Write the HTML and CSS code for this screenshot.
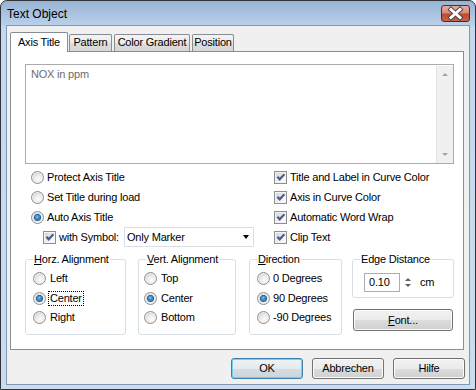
FILE: index.html
```html
<!DOCTYPE html>
<html lang="en">
<head>
    <meta charset="UTF-8">
    <title>Text Object</title>
    <link rel="stylesheet" href="styles.css">
</head>
<body>

<div class="window">
    <div class="titlebar">
        <span class="title">Text Object</span>
        <span class="close">
            <svg width="27" height="15" viewBox="0 0 27 15">
                <path d="M9 3.5 L18 11.5 M18 3.5 L9 11.5" stroke="#4b4b4b" stroke-width="5" stroke-linecap="square"/>
                <path d="M9 3.5 L18 11.5 M18 3.5 L9 11.5" stroke="#fff" stroke-width="3" stroke-linecap="square"/>
            </svg>
        </span>
    </div>

    <div class="client">
        <div class="tabs">
            <div class="tab active tab-axis">Axis Title</div>
            <div class="tab tab-pattern">Pattern</div>
            <div class="tab tab-gradient">Color Gradient</div>
            <div class="tab tab-position">Position</div>
        </div>

        <div class="panel">
            <div class="memo">
                <div class="memo-text">NOX in ppm</div>
                <div class="vscroll">
                    <span class="arrow-up"></span>
                    <span class="arrow-down"></span>
                </div>
            </div>

            <div class="options">
                <div class="col-left">
                    <div class="row"><span class="radio"></span>Protect Axis Title</div>
                    <div class="row"><span class="radio"></span>Set Title during load</div>
                    <div class="row"><span class="radio on"></span>Auto Axis Title</div>
                    <div class="row symbol">
                        <span class="check"><svg viewBox="0 0 11 11" width="11" height="11"><path d="M1.6 5.4 3.2 3.9 4.7 5.6 8.7 1.4 10.1 2.9 4.7 8.9Z"/></svg></span>
                        with Symbol:
                        <div class="combo">Only Marker<span class="combo-arrow"></span></div>
                    </div>
                </div>
                <div class="col-right">
                    <div class="row"><span class="check"><svg viewBox="0 0 11 11" width="11" height="11"><path d="M1.6 5.4 3.2 3.9 4.7 5.6 8.7 1.4 10.1 2.9 4.7 8.9Z"/></svg></span>Title and Label in Curve Color</div>
                    <div class="row"><span class="check"><svg viewBox="0 0 11 11" width="11" height="11"><path d="M1.6 5.4 3.2 3.9 4.7 5.6 8.7 1.4 10.1 2.9 4.7 8.9Z"/></svg></span>Axis in Curve Color</div>
                    <div class="row"><span class="check"><svg viewBox="0 0 11 11" width="11" height="11"><path d="M1.6 5.4 3.2 3.9 4.7 5.6 8.7 1.4 10.1 2.9 4.7 8.9Z"/></svg></span>Automatic Word Wrap</div>
                    <div class="row"><span class="check"><svg viewBox="0 0 11 11" width="11" height="11"><path d="M1.6 5.4 3.2 3.9 4.7 5.6 8.7 1.4 10.1 2.9 4.7 8.9Z"/></svg></span>Clip Text</div>
                </div>
            </div>

            <div class="groups">
                <fieldset class="group g-horz">
                    <legend><u>H</u>orz. Alignment</legend>
                    <div class="group-body">
                        <div class="grow"><span class="radio"></span>Left</div>
                        <div class="grow"><span class="radio on"></span><span class="focus">Center</span></div>
                        <div class="grow"><span class="radio"></span>Right</div>
                    </div>
                </fieldset>
                <fieldset class="group g-vert">
                    <legend><u>V</u>ert. Alignment</legend>
                    <div class="group-body">
                        <div class="grow"><span class="radio"></span>Top</div>
                        <div class="grow"><span class="radio on"></span>Center</div>
                        <div class="grow"><span class="radio"></span>Bottom</div>
                    </div>
                </fieldset>
                <fieldset class="group g-dir">
                    <legend><u>D</u>irection</legend>
                    <div class="group-body">
                        <div class="grow"><span class="radio"></span>0 Degrees</div>
                        <div class="grow"><span class="radio on"></span>90 Degrees</div>
                        <div class="grow"><span class="radio"></span>-90 Degrees</div>
                    </div>
                </fieldset>
                <div class="edge-col">
                    <fieldset class="group g-edge">
                        <legend>Edge Distance</legend>
                        <div class="spin-row">
                            <div class="spin-input">0.10</div>
                            <div class="spin-btns">
                                <span class="spin-up"></span>
                                <span class="spin-down"></span>
                            </div>
                            <span class="unit">cm</span>
                        </div>
                    </fieldset>
                    <div class="btn btn-font"><u>F</u>ont...</div>
                </div>
            </div>
        </div>

        <div class="buttons">
            <div class="btn btn-default">OK</div>
            <div class="btn">Abbrechen</div>
            <div class="btn">Hilfe</div>
        </div>
    </div>
</div>

</body>
</html>
```

FILE: styles.css
```css
body {
    margin: 0;
    font-family: "Liberation Sans", Arial, sans-serif;
    font-size: 11px;
    line-height: 13px;
    letter-spacing: -0.2px;
    color: #000;
    background: #fff;
}
.window {
    width: 476px;
    height: 390px;
    box-sizing: border-box;
    border: 1px solid #30353b;
    border-radius: 7px 7px 0 0;
    padding: 0 5px 4px;
    display: flex;
    flex-direction: column;
    background: linear-gradient(#98b4d3, #b9d0ea 24px, #c4d8ee 26px, #cadcef);
}
.titlebar {
    height: 24px;
    display: flex;
    justify-content: space-between;
    align-items: flex-start;
}
.title {
    font-size: 12px;
    line-height: 15px;
    letter-spacing: 0;
    margin: 6px 0 0 1px;
}
.close {
    box-sizing: border-box;
    width: 29px;
    height: 17px;
    margin: 4px 0 0 0;
    border: 1px solid #5b2720;
    border-radius: 3px;
    background: linear-gradient(#e8ada1, #d88a79 45%, #c1472f 55%, #c9634a);
    display: flex;
}
.client {
    flex: 1;
    background: #f0f0f0;
    border: 1px solid #8398b0;
    padding: 6px 5px 0 3px;
}

/* tabs */
.tabs {
    display: flex;
    align-items: flex-end;
    height: 19px;
}
.tab {
    box-sizing: border-box;
    height: 17px;
    border: 1px solid #898c95;
    border-bottom: none;
    border-radius: 2px 2px 0 0;
    background: linear-gradient(#f3f3f3, #ebebeb 50%, #dedede 50%, #d6d6d6);
    text-align: center;
    line-height: 15px;
}
.tab.active {
    height: 20px;
    margin-bottom: -1px;
    background: #fff;
    line-height: 18px;
    position: relative;
    z-index: 1;
}
.tab-axis { width: 58px; }
.tab-pattern { width: 43px; margin-left: 1px; }
.tab-gradient { width: 76px; margin-left: 2px; }
.tab-position { width: 42px; margin-left: 2px; }

.panel {
    box-sizing: border-box;
    height: 299px;
    border: 1px solid #898c95;
    background: #fff;
    padding: 12px 0 0 14px;
}

/* text box */
.memo {
    box-sizing: border-box;
    width: 429px;
    height: 100px;
    border: 1px solid #ababab;
    display: flex;
}
.memo-text {
    flex: 1;
    padding: 3px 0 0 5px;
    color: #6d6d6d;
}
.vscroll {
    box-sizing: border-box;
    width: 17px;
    margin-top: 1px;
    background: #f0f0f0;
    border-left: 1px solid #e4e4e4;
    display: flex;
    flex-direction: column;
    justify-content: space-between;
    align-items: center;
    padding: 7px 0 7px;
}
.arrow-up,
.arrow-down {
    width: 0;
    height: 0;
    border-left: 3px solid transparent;
    border-right: 3px solid transparent;
}
.arrow-up { border-bottom: 3px solid #a3a3a3; }
.arrow-down { border-top: 3px solid #a3a3a3; }

/* options */
.options {
    display: flex;
    margin-top: 3px;
}
.col-left {
    width: 249px;
    box-sizing: border-box;
    padding-left: 6px;
}
.row {
    display: flex;
    align-items: center;
    height: 20px;
    gap: 3px;
}
.symbol {
    padding-left: 12px;
}
.combo {
    box-sizing: border-box;
    width: 130px;
    height: 20px;
    margin-left: auto;
    margin-right: 20px;
    border: 1px solid #d9dfe6;
    background: #fff;
    display: flex;
    align-items: center;
    justify-content: space-between;
    padding: 0 4px 0 2px;
}
.combo-arrow {
    width: 0;
    height: 0;
    border-left: 3.5px solid transparent;
    border-right: 3.5px solid transparent;
    border-top: 4px solid #000;
}

.radio {
    box-sizing: border-box;
    width: 13px;
    height: 13px;
    flex: none;
    border-radius: 50%;
    border: 1px solid #8e8e8e;
    background: radial-gradient(circle at 60% 65%, #fdfdfd 0, #e9e9e9 45%, #c6c6c6 85%);
    box-shadow: inset 0 0 0 1px #f2f2f2;
    display: flex;
    align-items: center;
    justify-content: center;
}
.radio.on::after {
    content: "";
    width: 5px;
    height: 5px;
    border-radius: 50%;
    background: radial-gradient(circle at 45% 40%, #8ad6f7 0, #2d86c4 45%, #0f4f86 100%);
    box-shadow: 0 0 0 1px #1d5b8f;
}
.check {
    box-sizing: border-box;
    width: 13px;
    height: 13px;
    flex: none;
    border: 1px solid #8e8f8f;
    background: linear-gradient(135deg, #cfcfcf, #f7f7f7 70%, #ffffff);
    box-shadow: inset 0 0 0 1px #f4f4f4;
    display: flex;
    align-items: center;
    justify-content: center;
}
.check svg {
    fill: #4a5d90;
}

/* group boxes */
.groups {
    display: flex;
    align-items: flex-start;
    margin-top: 6px;
}
.group {
    box-sizing: border-box;
    margin: 0;
    padding: 0 0 6px;
    min-width: 0;
    border: 1px solid #d5dfe5;
    border-radius: 3px;
}
.group legend {
    padding: 0 1px;
    margin-left: 7px;
    line-height: 13px;
}
.group-body {
    padding-top: 3px;
}
.grow {
    display: flex;
    align-items: center;
    height: 19.5px;
    gap: 4px;
}
.focus {
    outline: 1px dotted #000;
    outline-offset: 0;
    padding: 0 1px;
    margin-left: -1px;
}
.g-horz { width: 101px; }
.g-horz .group-body { padding-left: 7px; }
.g-vert { width: 98px; margin-left: 12px; }
.g-vert .group-body { padding-left: 5px; }
.g-dir { width: 93px; margin-left: 13px; }
.g-dir .group-body { padding-left: 7px; }
.g-dir .grow { gap: 3px; }

.edge-col {
    width: 102px;
    margin-left: 10px;
}
.g-edge {
    width: 102px;
    padding-bottom: 5px;
}
.spin-row {
    display: flex;
    align-items: center;
    padding: 7px 0 0 11px;
}
.spin-input {
    box-sizing: border-box;
    width: 36px;
    height: 19px;
    border: 1px solid #abadb3;
    background: #fff;
    padding: 2px 0 0 4px;
}
.spin-btns {
    box-sizing: border-box;
    width: 13px;
    height: 19px;
    margin-left: 1px;
    display: flex;
    flex-direction: column;
    align-items: center;
    justify-content: space-around;
    padding: 3px 0;
}
.spin-up,
.spin-down {
    width: 0;
    height: 0;
    border-left: 3px solid transparent;
    border-right: 3px solid transparent;
}
.spin-up { border-bottom: 3px solid #606060; }
.spin-down { border-top: 3px solid #606060; }
.unit {
    margin-left: 6px;
}

/* buttons */
.btn {
    box-sizing: border-box;
    width: 72px;
    height: 21px;
    border: 1px solid #707070;
    border-radius: 3px;
    background: linear-gradient(#f2f2f2, #ebebeb 50%, #dddddd 50%, #cfcfcf);
    box-shadow: inset 0 0 0 1px #fbfbfb;
    display: flex;
    align-items: center;
    justify-content: center;
}
.btn-font {
    width: 100px;
    height: 22px;
    margin: 11px 0 0 1px;
}
.btn-default {
    border-color: #3c7fb1;
    box-shadow: inset 0 0 0 1px #6ed2f5;
    background: linear-gradient(#eef3f6, #e4eaee 50%, #d6dde2 50%, #ccd4da);
}
.buttons {
    display: flex;
    justify-content: flex-end;
    gap: 9px;
    margin: 8px -1px 0 0;
}
```
